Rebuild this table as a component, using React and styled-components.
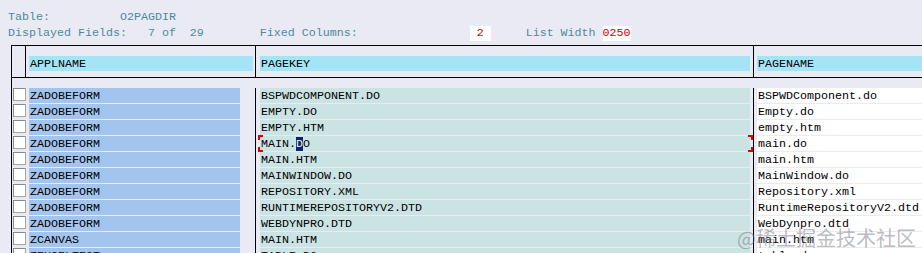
import React from 'react';
import styled, { createGlobalStyle } from 'styled-components';

const GlobalStyle = createGlobalStyle`
  html, body {
    margin: 0;
    padding: 0;
    background: #eaeaf5;
    overflow: hidden;
  }
  body {
    font-family: "Liberation Mono", "DejaVu Sans Mono", monospace;
    font-size: 11.67px;
  }
`;

const Screen = styled.div`
  position: relative;
  width: 922px;
  height: 253px;
  overflow: hidden;
  background: #eaeaf5;
`;

const Info = styled.div`
  padding: 9px 0 0 8px;
  color: #4b8b99;
`;

const InfoLine = styled.div`
  height: 16px;
  line-height: 16px;
  white-space: pre;
`;

const Value = styled.span`
  display: inline-block;
  height: 15px;
  line-height: 15px;
  background: #ffffff;
  color: #c80000;
`;

const Table = styled.div`
  margin: 4px 0 0 11px;
  border-left: 1px solid #000;
`;

const HeaderRow = styled.div`
  display: grid;
  grid-template-columns: 14px 230px 498px 1fr;
  height: 33px;
  box-sizing: border-box;
  border-top: 1px solid #000;
  border-bottom: 1px solid #000;
`;

const Body = styled.div`
  padding-top: 10px;
`;

const DataRow = styled.div`
  display: grid;
  grid-template-columns: 14px 230px 498px 1fr;
  height: 16px;
`;

const Cell = styled.div`
  box-sizing: border-box;
  border-right: ${(p) => (p.$ruled ? '1px solid #000' : 'none')};
  min-width: 0;
`;

const HeadCell = styled(Cell)`
  padding-top: 10px;
`;

const Band = styled.div`
  position: relative;
  box-sizing: border-box;
  height: 15px;
  margin: ${(p) => p.$margin};
  padding: 2px 0 0 1px;
  line-height: 13px;
  white-space: pre;
  color: #000;
  background: ${(p) => p.$bg};
`;

const CheckBox = styled.div`
  box-sizing: border-box;
  width: 13px;
  height: 13px;
  margin-left: 1px;
  background: #fff;
  border: 1px solid #a4a4a4;
  border-top-color: #8a8a8a;
  border-left-color: #8a8a8a;
`;

const Cursor = styled.span`
  background: #0c2568;
  color: #f4f4ff;
`;

const FocusFrame = styled.div`
  position: absolute;
  top: -1px;
  bottom: -1px;
  left: -2px;
  right: -3px;
  pointer-events: none;

  &::before,
  &::after {
    content: '';
    position: absolute;
    top: 0;
    bottom: 0;
    width: 5px;
  }
  &::before {
    left: 0;
    background:
      linear-gradient(#e00000, #e00000) left top / 2px 5px no-repeat,
      linear-gradient(#e00000, #e00000) left top / 5px 2px no-repeat,
      linear-gradient(#e00000, #e00000) left bottom / 2px 5px no-repeat,
      linear-gradient(#e00000, #e00000) left bottom / 5px 2px no-repeat;
  }
  &::after {
    right: 0;
    background:
      linear-gradient(#e00000, #e00000) right top / 2px 5px no-repeat,
      linear-gradient(#e00000, #e00000) right top / 5px 2px no-repeat,
      linear-gradient(#e00000, #e00000) right bottom / 2px 5px no-repeat,
      linear-gradient(#e00000, #e00000) right bottom / 5px 2px no-repeat;
  }
`;

const Watermark = styled.div`
  position: absolute;
  right: 6px;
  bottom: 4px;
  font-family: "Noto Sans CJK SC", "Noto Sans", sans-serif;
  font-size: 20px;
  line-height: 22px;
  color: rgba(120, 120, 130, 0.5);
  white-space: nowrap;
`;

const CYAN = '#a4e4f4';
const BLUE = '#a3c4ec';
const TEAL = '#cce3e4';
const WHITE = '#ffffff';

const rows = [
  ['ZADOBEFORM', 'BSPWDCOMPONENT.DO', 'BSPWDComponent.do'],
  ['ZADOBEFORM', 'EMPTY.DO', 'Empty.do'],
  ['ZADOBEFORM', 'EMPTY.HTM', 'empty.htm'],
  ['ZADOBEFORM', 'MAIN.DO', 'main.do'],
  ['ZADOBEFORM', 'MAIN.HTM', 'main.htm'],
  ['ZADOBEFORM', 'MAINWINDOW.DO', 'MainWindow.do'],
  ['ZADOBEFORM', 'REPOSITORY.XML', 'Repository.xml'],
  ['ZADOBEFORM', 'RUNTIMEREPOSITORYV2.DTD', 'RuntimeRepositoryV2.dtd'],
  ['ZADOBEFORM', 'WEBDYNPRO.DTD', 'WebDynpro.dtd'],
  ['ZCANVAS', 'MAIN.HTM', 'main.htm'],
  ['ZEXCELTEST', 'TABLE.DO', 'table.do'],
];

const FOCUS_ROW = 3;

const PageKey = ({ text, focused }) =>
  focused ? (
    <>
      {text.slice(0, 5)}
      <Cursor>{text.slice(5, 6)}</Cursor>
      {text.slice(6)}
      <FocusFrame />
    </>
  ) : (
    text
  );

const App = () => (
  <Screen>
    <GlobalStyle />
    <Info>
      <InfoLine>{'Table:          O2PAGDIR'}</InfoLine>
      <InfoLine>
        {'Displayed Fields:   7 of  29        Fixed Columns:                '}
        <Value>{' 2 '}</Value>
        {'     List Width '}
        <Value>0250</Value>
      </InfoLine>
    </Info>
    <Table>
      <HeaderRow>
        <HeadCell $ruled />
        <HeadCell $ruled>
          <Band $bg={CYAN} $margin="0 2px 0 3px">APPLNAME</Band>
        </HeadCell>
        <HeadCell $ruled>
          <Band $bg={CYAN} $margin="0 3px 0 4px">PAGEKEY</Band>
        </HeadCell>
        <HeadCell>
          <Band $bg={CYAN} $margin="0 0 0 3px">PAGENAME</Band>
        </HeadCell>
      </HeaderRow>
      <Body>
        {rows.map(([appl, key, name], i) => (
          <DataRow key={i}>
            <Cell>
              <CheckBox />
            </Cell>
            <Cell $ruled>
              <Band $bg={BLUE} $margin="0 15px 0 3px">{appl}</Band>
            </Cell>
            <Cell $ruled>
              <Band $bg={TEAL} $margin="0 3px 0 4px">
                <PageKey text={key} focused={i === FOCUS_ROW} />
              </Band>
            </Cell>
            <Cell>
              <Band $bg={WHITE} $margin="0 0 0 3px">{name}</Band>
            </Cell>
          </DataRow>
        ))}
      </Body>
    </Table>
    <Watermark>@稀土掘金技术社区</Watermark>
  </Screen>
);

export default App;
